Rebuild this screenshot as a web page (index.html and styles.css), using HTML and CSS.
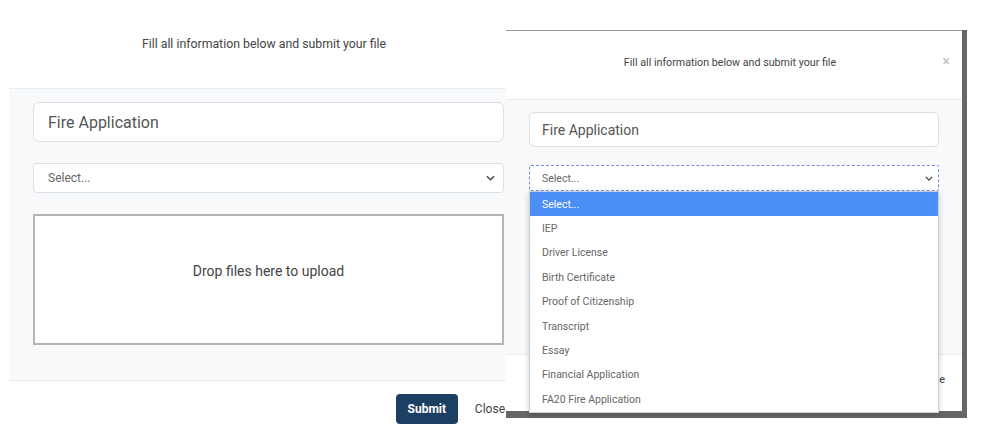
FILE: index.html
```html
<!DOCTYPE html>
<html lang="en">
<head>
    <meta charset="UTF-8">
    <meta name="viewport" content="width=device-width, initial-scale=1.0">
    <title>Upload File</title>
    <link rel="stylesheet" href="styles.css">
</head>
<body>
    <div class="modal modal-main">
        <div class="modal-header">
            <p class="modal-title">Fill all information below and submit your file</p>
        </div>
        <div class="modal-body">
            <div class="field">Fire Application</div>
            <div class="select">
                <span>Select...</span>
                <svg class="chevron" viewBox="0 0 10 6" width="9" height="6"><path d="M1 1l4 4 4-4" fill="none" stroke="#444" stroke-width="1.6"/></svg>
            </div>
            <div class="dropzone">Drop files here to upload</div>
        </div>
        <div class="modal-footer">
            <button class="btn-submit">Submit</button>
            <span class="btn-close">Close</span>
        </div>
    </div>

    <div class="modal modal-shot">
        <div class="modal-header">
            <p class="modal-title">Fill all information below and submit your file</p>
            <span class="close-x">&times;</span>
        </div>
        <div class="modal-body">
            <div class="field">Fire Application</div>
            <div class="select focused">
                <span>Select...</span>
                <svg class="chevron" viewBox="0 0 10 6" width="8" height="5"><path d="M1 1l4 4 4-4" fill="none" stroke="#444" stroke-width="1.6"/></svg>
                <ul class="options">
                    <li class="active">Select...</li>
                    <li>IEP</li>
                    <li>Driver License</li>
                    <li>Birth Certificate</li>
                    <li>Proof of Citizenship</li>
                    <li>Transcript</li>
                    <li>Essay</li>
                    <li>Financial Application</li>
                    <li>FA20 Fire Application</li>
                </ul>
            </div>
            <div class="dropzone">Drop files here to upload</div>
        </div>
        <div class="modal-footer">
            <span class="btn-close">Close</span>
        </div>
    </div>
</body>
</html>
```

FILE: styles.css
```css
* {
    margin: 0;
    padding: 0;
    box-sizing: border-box;
}

body {
    font-family: Roboto, 'Liberation Sans', Arial, sans-serif;
    background: #ffffff;
    width: 981px;
    height: 427px;
    overflow: hidden;
    position: relative;
    color: #444;
}

.modal {
    background: #fff;
    display: flex;
    flex-direction: column;
}

.modal-main {
    width: 519px;
    margin-left: 9px;
}

.modal-header {
    position: relative;
    height: 89px;
    padding-right: 9px;
    display: flex;
    align-items: center;
    justify-content: center;
    border-bottom: 1px solid #e9ecef;
}

.modal-title {
    font-size: 12.3px;
    color: #444;
}

.modal-body {
    background: #f8f9fa;
    padding: 13px 24px 35px;
    display: flex;
    flex-direction: column;
    gap: 21px;
}

.field {
    height: 40px;
    background: #fff;
    border: 1px solid #dcdfe3;
    border-radius: 6px;
    padding: 0 14px;
    display: flex;
    align-items: center;
    font-size: 16px;
    color: #555;
}

.select {
    position: relative;
    height: 30px;
    background: #fff;
    border: 1px solid #dcdfe3;
    border-radius: 4px;
    padding: 0 8px 0 14px;
    display: flex;
    align-items: center;
    justify-content: space-between;
    font-size: 12px;
    color: #666;
}

.dropzone {
    height: 131px;
    background: #fff;
    border: 2px solid #b4b4b4;
    padding-top: 47px;
    text-align: center;
    font-size: 14px;
    color: #444;
}

.modal-footer {
    border-top: 1px solid #e9ecef;
    padding: 13px 23px 12px;
    display: flex;
    justify-content: flex-end;
    align-items: center;
    gap: 17px;
}

.btn-submit {
    width: 62px;
    height: 30px;
    border: none;
    border-radius: 4px;
    background: #1d3f63;
    color: #fff;
    font-family: inherit;
    font-size: 12px;
    font-weight: 700;
}

.btn-close {
    font-size: 12px;
    color: #444;
}

/* second screenshot pasted on top */
.modal-shot {
    position: absolute;
    left: 506px;
    top: 30px;
    width: 456px;
    height: 381px;
    border-top: 1px solid #9a9a9a;
    box-shadow: 5px 0 0 #666, 0 7px 0 #666, 5px 7px 0 #666;
}

.modal-shot .modal-header {
    height: 69px;
    padding: 0 8px 6px 0;
}

.modal-shot .modal-title {
    font-size: 10.7px;
}

.close-x {
    position: absolute;
    right: 12px;
    top: 22px;
    font-size: 14px;
    color: #bbb;
}

.modal-shot .modal-body {
    height: 254px;
    padding: 12px 23px 0;
    gap: 18px;
}

.modal-shot .field {
    height: 35px;
    padding: 0 12px;
    font-size: 14px;
}

.modal-shot .select {
    height: 26px;
    padding: 0 5px 0 12px;
    font-size: 10.5px;
    border: 1px dashed #6d8fe8;
    border-radius: 2px;
}

.options {
    position: absolute;
    top: 25px;
    left: -1px;
    right: -1px;
    list-style: none;
    background: #fff;
    border: 1px solid #cfcfcf;
    box-shadow: 0 2px 6px rgba(0, 0, 0, 0.2);
    z-index: 2;
}

.options li {
    height: 24.4px;
    padding-left: 12px;
    display: flex;
    align-items: center;
    font-size: 10.5px;
    color: #666;
}

.options li.active {
    background: #4a8ef6;
    color: #fff;
}

.modal-shot .dropzone {
    height: 110px;
}

.modal-shot .modal-footer {
    flex: 1;
    padding: 0 17px 8px;
}

.modal-shot .btn-close {
    font-size: 11px;
}
```
